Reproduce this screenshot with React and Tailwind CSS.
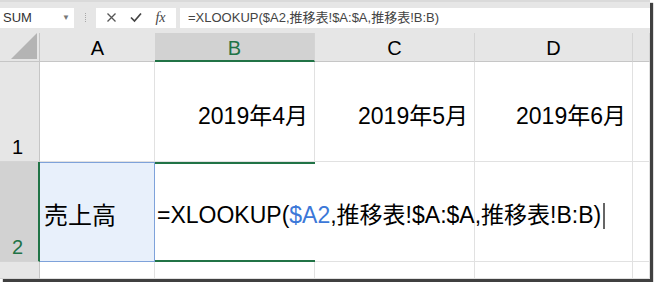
import React from "react";

const sans = { fontFamily: '"Liberation Sans", "Noto Sans CJK JP", sans-serif' };

function HeaderCell({ children, active, className = "" }) {
  return (
    <div
      className={
        "flex items-center justify-center text-[20px] leading-none border-r border-[#d4d4d4] " +
        (active
          ? "bg-[#d2d2d2] text-[#217346] border-b-2 border-b-[#217346] "
          : "bg-[#e6e6e6] text-black border-b border-b-[#c6c6c6] ") +
        className
      }
    >
      <span className="pt-[2px]">{children}</span>
    </div>
  );
}

function RowHead({ children, active }) {
  return (
    <div
      className={
        "flex items-end pl-[12px] pb-[4px] text-[20px] leading-none border-b border-b-[#d4d4d4] " +
        (active
          ? "bg-[#d2d2d2] text-[#217346] border-r-2 border-r-[#217346]"
          : "bg-[#e6e6e6] text-black border-r border-r-[#c6c6c6]")
      }
    >
      {children}
    </div>
  );
}

function Cell({ children, className = "" }) {
  return (
    <div className={"border-r border-b border-[#e1e1e1] bg-white " + className}>{children}</div>
  );
}

function MonthCell({ text }) {
  return (
    <Cell className="flex items-center justify-end pr-[6px] pt-[9px] text-[23px] leading-none text-black">
      {text}
    </Cell>
  );
}

export default function App() {
  return (
    <div className="w-[654px] h-[282px] bg-white" style={sans}>
      <div className="w-[650px] h-[279px] shadow-[3px_3px_1px_rgba(0,0,0,0.75)] flex flex-col overflow-hidden">
        {/* Formula bar */}
        <div className="h-[33px] bg-[#e6e6e6] border-t-2 border-[#dadada] flex items-center">
          <div className="w-[74px] h-[20px] bg-white flex items-center justify-between pl-[3px] pr-[4px]">
            <span className="text-[13px] text-[#333]">SUM</span>
            <span className="text-[8px] text-[#777]">▼</span>
          </div>
          <div className="w-[22px] flex justify-center">
            <div className="h-[9px] border-l border-dotted border-[#a8a8a8]" />
          </div>
          <div className="w-[80px] h-[20px] bg-white flex items-center justify-around px-[4px]">
            <svg width="11" height="11" viewBox="0 0 11 11">
              <path d="M1.5 1.5 L9.5 9.5 M9.5 1.5 L1.5 9.5" stroke="#555" strokeWidth="1.3" />
            </svg>
            <svg width="12" height="11" viewBox="0 0 12 11">
              <path d="M1 5.5 L4.5 9 L11 1.5" stroke="#444" strokeWidth="1.7" fill="none" />
            </svg>
            <span
              className="italic text-[14px] text-[#444] leading-none"
              style={{ fontFamily: '"Liberation Serif", serif' }}
            >
              fx
            </span>
          </div>
          <div className="ml-[4px] flex-1 h-[20px] bg-white flex items-center pl-[8px] text-[13px] text-[#444] whitespace-nowrap">
            =XLOOKUP($A2,推移表!$A:$A,推移表!B:B)
          </div>
        </div>

        {/* Sheet grid */}
        <div className="grid grid-cols-[40px_115px_160px_160px_158px_17px] grid-rows-[29px_100px_100px_17px] flex-1">
          <div className="bg-[#e6e6e6] border-r border-b border-[#c6c6c6] flex items-end justify-end pr-[2px] pb-[2px]">
            <svg width="26" height="26" viewBox="0 0 26 26">
              <path d="M26 0 L26 26 L0 26 Z" fill="#b4b4b4" />
            </svg>
          </div>
          <HeaderCell className="border-r-0">A</HeaderCell>
          <HeaderCell active>B</HeaderCell>
          <HeaderCell>C</HeaderCell>
          <HeaderCell>D</HeaderCell>
          <HeaderCell />

          <RowHead>1</RowHead>
          <Cell />
          <MonthCell text="2019年4月" />
          <MonthCell text="2019年5月" />
          <MonthCell text="2019年6月" />
          <Cell />

          <RowHead active>2</RowHead>
          <div className="bg-[#e8f0fb] border-y border-r border-[#7ea2da] flex items-center pl-[4px] pt-[7px] text-[24px] leading-none text-black">
            売上高
          </div>
          <div className="relative z-10 border-y-2 border-[#217346] flex items-center pl-[2px] pt-[7px] text-[23px] leading-none text-black whitespace-nowrap">
            <span className="shrink-0">
              =XLOOKUP(<span className="text-[#3c78d8]">$A2</span>,推移表!$A:$A,推移表!B:B)
            </span>
            <span className="shrink-0 inline-block w-[2px] h-[26px] bg-[#666] ml-[2px]" />
          </div>
          <Cell />
          <Cell />
          <Cell />

          <RowHead />
          <Cell />
          <Cell />
          <Cell />
          <Cell />
          <Cell />
        </div>
      </div>
    </div>
  );
}
